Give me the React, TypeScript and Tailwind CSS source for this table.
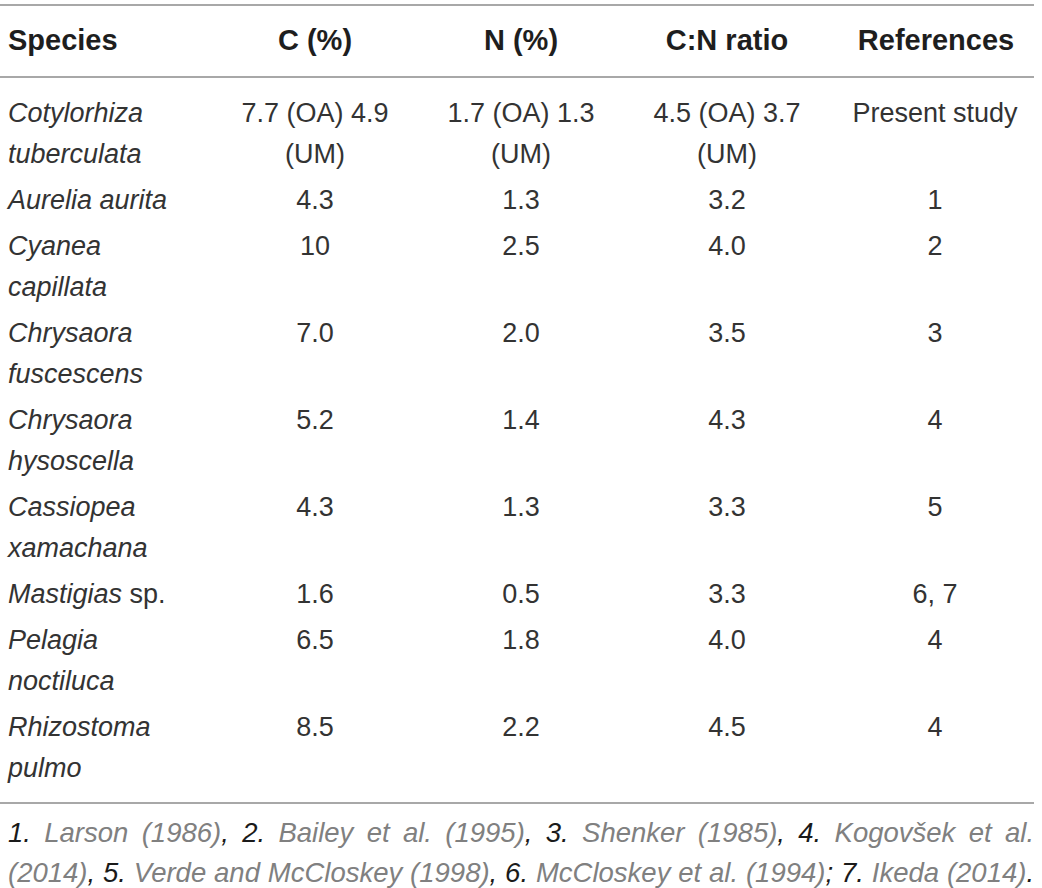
import React from 'react'

type Row = {
  species: React.ReactNode[]
  c: string[]
  n: string[]
  ratio: string[]
  refs: string
}

const ROWS: Row[] = [
  {
    species: [<i key="a">Cotylorhiza</i>, <i key="b">tuberculata</i>],
    c: ['7.7 (OA) 4.9', '(UM)'],
    n: ['1.7 (OA) 1.3', '(UM)'],
    ratio: ['4.5 (OA) 3.7', '(UM)'],
    refs: 'Present study',
  },
  { species: [<i key="a">Aurelia aurita</i>], c: ['4.3'], n: ['1.3'], ratio: ['3.2'], refs: '1' },
  { species: [<i key="a">Cyanea</i>, <i key="b">capillata</i>], c: ['10'], n: ['2.5'], ratio: ['4.0'], refs: '2' },
  { species: [<i key="a">Chrysaora</i>, <i key="b">fuscescens</i>], c: ['7.0'], n: ['2.0'], ratio: ['3.5'], refs: '3' },
  { species: [<i key="a">Chrysaora</i>, <i key="b">hysoscella</i>], c: ['5.2'], n: ['1.4'], ratio: ['4.3'], refs: '4' },
  { species: [<i key="a">Cassiopea</i>, <i key="b">xamachana</i>], c: ['4.3'], n: ['1.3'], ratio: ['3.3'], refs: '5' },
  {
    species: [
      <span key="a">
        <i>Mastigias</i> sp.
      </span>,
    ],
    c: ['1.6'],
    n: ['0.5'],
    ratio: ['3.3'],
    refs: '6, 7',
  },
  { species: [<i key="a">Pelagia</i>, <i key="b">noctiluca</i>], c: ['6.5'], n: ['1.8'], ratio: ['4.0'], refs: '4' },
  { species: [<i key="a">Rhizostoma</i>, <i key="b">pulmo</i>], c: ['8.5'], n: ['2.2'], ratio: ['4.5'], refs: '4' },
]

const GRID = 'grid grid-cols-[212px_206px_206px_206px_206px]'

function Lines({ items }: { items: React.ReactNode[] }) {
  return (
    <>
      {items.map((t, i) => (
        <div key={i}>{t}</div>
      ))}
    </>
  )
}

export default function App() {
  return (
    <div
      className="w-[1042px] h-[888px] bg-white text-[#333] pt-[4px]"
      style={{ fontFamily: '"Liberation Sans", Arial, sans-serif' }}
    >
      <div className="w-[1034px]">
        <div className={`${GRID} border-t-2 border-b-2 border-[#a8a8a8] h-[74px] items-center text-[29px] font-bold text-[#1e1e1e]`}>
          <div className="pl-[8px]">Species</div>
          <div className="text-center">C (%)</div>
          <div className="text-center">N (%)</div>
          <div className="text-center">C:N ratio</div>
          <div className="text-center pl-[6px]">References</div>
        </div>

        <div className="pt-[12px] pb-[11px] border-b-2 border-[#a8a8a8] text-[27px] leading-[41px]">
          {ROWS.map((r, i) => (
            <div key={i} className={`${GRID} py-[2.5px]`}>
              <div className="pl-[8px]">
                <Lines items={r.species} />
              </div>
              <div className="text-center">
                <Lines items={r.c} />
              </div>
              <div className="text-center">
                <Lines items={r.n} />
              </div>
              <div className="text-center">
                <Lines items={r.ratio} />
              </div>
              <div className="text-center whitespace-nowrap pl-[4px]">{r.refs}</div>
            </div>
          ))}
        </div>

        <div className="pl-[8px] pt-[9px] text-[27.5px] leading-[40px] italic text-[#808080] whitespace-nowrap">
          <div className="text-justify [text-align-last:justify]">
            <span className="text-[#1a1a1a]">1.</span> Larson (1986)<span className="text-[#1a1a1a]">, 2.</span> Bailey et al. (1995)
            <span className="text-[#1a1a1a]">, 3.</span> Shenker (1985)<span className="text-[#1a1a1a]">, 4.</span> Kogovšek et al.
          </div>
          <div className="text-justify [text-align-last:justify]">
            (2014)<span className="text-[#1a1a1a]">, 5.</span> Verde and McCloskey (1998)<span className="text-[#1a1a1a]">, 6.</span> McCloskey et al. (1994)
            <span className="text-[#1a1a1a]">; 7.</span> Ikeda (2014)<span className="text-[#1a1a1a]">.</span>
          </div>
        </div>
      </div>
    </div>
  )
}
